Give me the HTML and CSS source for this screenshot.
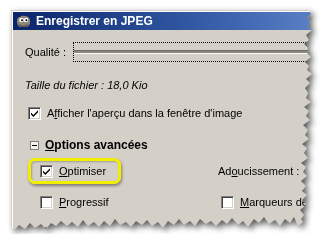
FILE: index.html
```html
<!DOCTYPE html>
<html>

<head>
    <title>Enregistrer en JPEG</title>
    <link rel="stylesheet" href="styles.css">
</head>

<body>
    <div class="shadow">
        <div class="window">
            <div class="titlebar">
                <svg class="appicon" width="15" height="13" viewBox="0 0 15 13">
                    <path d="M1 6 Q1 2 4 2 Q6 0 9 1 Q13 1 14 5 Q15 10 11 12 L4 12 Q1 11 1 6 Z" fill="#8c877a" />
                    <path d="M3 9 Q7 12 12 9 L12 11 Q7 13 3 11 Z" fill="#5c5648" />
                    <circle cx="5.5" cy="5" r="2.3" fill="#fff" />
                    <circle cx="10" cy="5" r="2.3" fill="#fff" />
                    <circle cx="6" cy="5.3" r="1" fill="#000" />
                    <circle cx="10.4" cy="5.3" r="1" fill="#000" />
                </svg>
                <span class="title">Enregistrer en JPEG</span>
            </div>

            <div class="content">
                <div class="row quality">
                    <label>Qualit&eacute; :</label>
                    <div class="slider">
                        <div class="trough"></div>
                    </div>
                </div>

                <div class="row filesize">Taille du fichier : 18,0 Kio</div>

                <div class="row preview">
                    <span class="check on"></span>
                    <span>A<u>f</u>ficher l'aper&ccedil;u dans la fen&ecirc;tre d'image</span>
                </div>

                <div class="row expander">
                    <span class="minus"></span>
                    <span><u>O</u>ptions avanc&eacute;es</span>
                </div>

                <div class="options">
                    <div class="cell">
                        <div class="highlight">
                            <span class="check on"></span>
                            <span><u>O</u>ptimiser</span>
                        </div>
                    </div>
                    <div class="cell">
                        <span>Ad<u>o</u>ucissement :</span>
                        <span class="spin"></span>
                    </div>

                    <div class="cell">
                        <span class="check"></span>
                        <span><u>P</u>rogressif</span>
                    </div>
                    <div class="cell marker">
                        <span class="check"></span>
                        <span><u>M</u>arqueurs de red&eacute;marrage</span>
                    </div>

                    <div class="cell">
                        <span class="check"></span>
                        <span>Enregistrer les donn&eacute;es <u>E</u>XIF</span>
                    </div>
                    <div class="cell marker">
                        <span class="check"></span>
                        <span>Intervalle</span>
                    </div>
                </div>
            </div>
        </div>
    </div>
</body>

</html>
```

FILE: styles.css
```css
body {
    margin: 0;
    background: #fff;
    font-family: "Liberation Sans", Arial, sans-serif;
    font-size: 11px;
    color: #000;
    overflow: hidden;
}

.shadow {
    filter: drop-shadow(3px 3px 3px rgba(0, 0, 0, 0.65));
}

/* torn right and bottom edges */
.window {
    margin: 10px 0 0 11px;
    width: 303px;
    height: 224px;
    padding: 2px 0 0 2px;
    box-sizing: border-box;
    background: #d4d0c8;
    box-shadow: inset 1px 1px 0 #d4d0c8, inset 2px 2px 0 #fff;
    overflow: hidden;
    clip-path: polygon(0 0, 298px 0, 300px 4px, 296px 8px, 299px 12px, 297px 17px, 301px 20px, 295px 25px, 298px 30px, 293px 34px, 297px 38px, 296px 43px, 300px 47px, 294px 52px, 298px 56px, 296px 60px, 301px 64px, 295px 69px, 299px 73px, 294px 78px, 297px 83px, 295px 88px, 300px 92px, 293px 97px, 298px 101px, 295px 106px, 299px 110px, 292px 115px, 297px 120px, 294px 125px, 298px 129px, 291px 134px, 296px 138px, 293px 143px, 297px 148px, 290px 153px, 295px 157px, 292px 162px, 296px 166px, 290px 171px, 295px 176px, 291px 181px, 296px 185px, 291px 190px, 295px 195px, 289px 200px, 293px 205px, 290px 209px, 292px 212px, 287px 216px, 283px 207px, 279px 213px, 274px 209px, 269px 216px, 264px 210px, 258px 214px, 253px 207px, 248px 213px, 243px 209px, 237px 217px, 232px 211px, 227px 215px, 221px 208px, 216px 214px, 211px 210px, 205px 216px, 200px 211px, 195px 214px, 189px 209px, 184px 216px, 179px 211px, 173px 215px, 168px 209px, 163px 215px, 157px 211px, 152px 218px, 147px 212px, 141px 216px, 136px 210px, 131px 215px, 125px 211px, 120px 217px, 115px 212px, 109px 215px, 104px 209px, 99px 216px, 93px 211px, 88px 217px, 83px 212px, 77px 216px, 72px 210px, 67px 217px, 61px 212px, 56px 216px, 50px 211px, 45px 216px, 40px 213px, 35px 219px, 30px 214px, 24px 218px, 19px 213px, 14px 219px, 8px 215px, 3px 220px, 0 216px);
}

.titlebar {
    height: 18px;
    display: flex;
    align-items: center;
    gap: 5px;
    padding-left: 3px;
    background: linear-gradient(to right, #0a246a, #3a62ad 70%, #5a7fc4);
    color: #fff;
}

.appicon {
    flex: none;
}

.title {
    font-weight: bold;
    font-size: 12px;
}

.content {
    padding-left: 12px;
}

.row {
    display: flex;
    align-items: center;
    height: 14px;
}

.quality {
    height: 20px;
    margin-top: 12px;
}

.quality label {
    width: 48px;
}

.slider {
    flex: 1;
    height: 20px;
    box-sizing: border-box;
    border: 1px dotted #000;
    padding-top: 7px;
}

.trough {
    height: 2px;
    background: #8a8780;
    border-top: 1px solid #6f6c66;
    border-bottom: 1px solid #fff;
}

.filesize {
    margin-top: 16px;
    font-style: italic;
}

.preview {
    margin-top: 14px;
    padding-left: 3px;
    gap: 6px;
}

.expander {
    margin-top: 18px;
    padding-left: 5px;
    gap: 6px;
    font-weight: bold;
    font-size: 12px;
}

.minus {
    width: 9px;
    height: 9px;
    box-sizing: border-box;
    border: 1px solid #808080;
    background: #f4f3ef linear-gradient(#000, #000) center / 5px 1px no-repeat;
}

.options {
    display: grid;
    grid-template-columns: 178px auto;
    grid-auto-rows: 14px;
    row-gap: 17px;
    padding-left: 15px;
    margin-top: 6px;
    padding-top: 6px;
}

.cell {
    display: flex;
    align-items: center;
    gap: 6px;
    white-space: nowrap;
}

.marker {
    padding-left: 3px;
}

.highlight {
    display: flex;
    align-items: center;
    gap: 6px;
    margin: -6px 0 -6px -12px;
    padding: 0 12px 0 9px;
    height: 26px;
    box-sizing: border-box;
    border: 3px solid #f2ee00;
    border-radius: 7px;
    box-shadow: 1px 2px 3px rgba(0, 0, 0, 0.4), inset 1px 1px 2px rgba(0, 0, 0, 0.25);
}

.check {
    flex: none;
    width: 13px;
    height: 13px;
    box-sizing: border-box;
    border: 1px solid;
    border-color: #808080 #fff #fff #808080;
    box-shadow: inset 1px 1px 0 #404040, inset -1px -1px 0 #d4d0c8;
    background: #fff;
}

.check.on {
    background: #fff url("data:image/svg+xml,%3Csvg xmlns='http://www.w3.org/2000/svg' width='11' height='11'%3E%3Cpath d='M2 4.5 L4.3 7 L9 2.2 L9 4.2 L4.3 9 L2 6.5 Z' fill='%23000'/%3E%3C/svg%3E") center / 11px 11px no-repeat;
}

.spin {
    width: 20px;
    height: 18px;
    margin-left: 4px;
    box-sizing: border-box;
    border: 1px solid;
    border-color: #808080 #fff #fff #808080;
    box-shadow: inset 1px 1px 0 #404040;
    background: #fff;
}
```
